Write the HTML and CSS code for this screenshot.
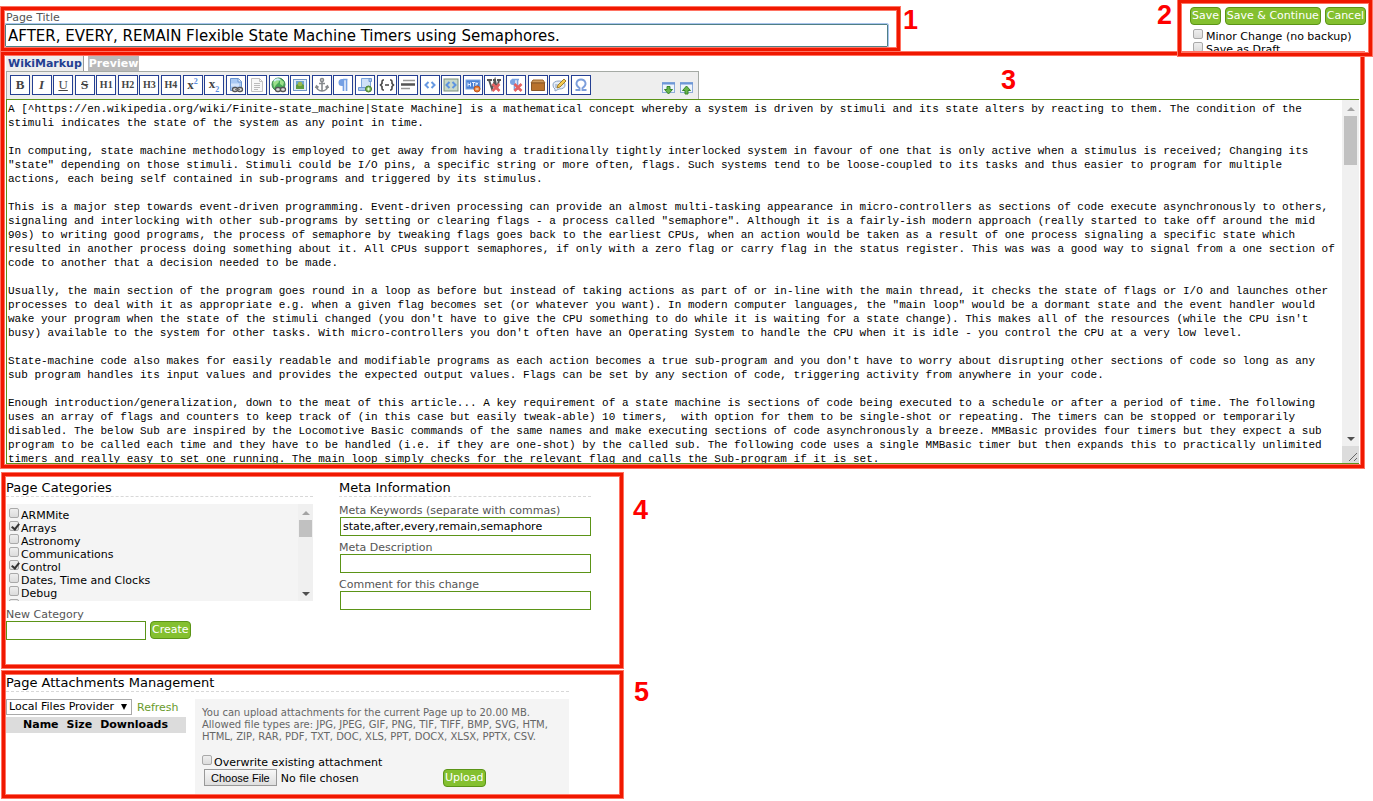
FILE: index.html
```html
<!DOCTYPE html>
<html lang="en">
<head>
<meta charset="utf-8">
<title>Edit Page</title>
<link rel="stylesheet" href="styles.css">
</head>
<body>
<header class="top">
  <div class="title-field">
    <label for="title">Page Title</label>
    <input id="title" class="title-input" type="text" value="AFTER, EVERY, REMAIN Flexible State Machine Timers using Semaphores.">
  </div>
  <div class="actions">
    <div class="action-buttons">
      <button class="btn">Save</button>
      <button class="btn">Save &amp; Continue</button>
      <button class="btn">Cancel</button>
    </div>
    <label class="check"><input type="checkbox"><span>Minor Change (no backup)</span></label>
    <label class="check"><input type="checkbox"><span>Save as Draft</span></label>
  </div>
</header>

<main>
<section class="editor">
  <nav class="tabs">
    <button class="tab tab-active">WikiMarkup</button>
    <button class="tab">Preview</button>
  </nav>
  <div class="toolbar">
    <div class="tools">
      <button class="tool" aria-label="Bold"><b>B</b></button>
      <button class="tool" aria-label="Italic"><b><i>I</i></b></button>
      <button class="tool" aria-label="Underline"><u>U</u></button>
      <button class="tool" aria-label="Strikethrough"><b><s>S</s></b></button>
      <button class="tool tool-h" aria-label="Heading 1">H1</button>
      <button class="tool tool-h" aria-label="Heading 2">H2</button>
      <button class="tool tool-h" aria-label="Heading 3">H3</button>
      <button class="tool tool-h" aria-label="Heading 4">H4</button>
      <button class="tool tool-x" aria-label="Superscript"><span>x<sup>2</sup></span></button>
      <button class="tool tool-x" aria-label="Subscript"><span>x<sub>2</sub></span></button>
      <button class="tool" aria-label="Page link"><svg viewBox="0 0 16 16"><path d="M2.500 1.500h8l3 3v9h-11z" fill="#a9c9f3" stroke="#6b95cf"/><path d="M10 1.500v3.500h3.500" fill="#e6f0fc" stroke="#6b95cf"/><path d="M3 8h8" stroke="#d5e5fa" stroke-width="3"/><rect x="4.500" y="10.500" width="5" height="4" rx="2" fill="#ddd" stroke="#555" stroke-width="1.300"/><rect x="9.500" y="10.500" width="5" height="4" rx="2" fill="#ddd" stroke="#555" stroke-width="1.300"/><path d="M7 12.500h5" stroke="#777"/></svg></button>
      <button class="tool" aria-label="Page"><svg viewBox="0 0 16 16"><path d="M2.500 1.500h8l3 3v10h-11z" fill="#f8f8f8" stroke="#c2c2c2"/><path d="M10.500 1.500v3h3" fill="none" stroke="#c2c2c2"/><path d="M5 6.500h6M5 8.500h6M5 10.500h6M5 12.500h4" stroke="#bbb"/></svg></button>
      <button class="tool" aria-label="External link"><svg viewBox="0 0 16 16"><circle cx="7.500" cy="7.500" r="6.500" fill="#48a957" stroke="#3e8a57"/><path d="M2 5q3-4 5-3l1 3-3 3-2 3zM9 2l4 3-1 4-3-2z" fill="#9be08b"/><path d="M3 4q3-3 6-1" stroke="#d4efff" stroke-width="2" fill="none"/><rect x="4.500" y="10.500" width="5" height="4" rx="2" fill="#ddd" stroke="#555" stroke-width="1.300"/><rect x="9.500" y="10.500" width="5" height="4" rx="2" fill="#ddd" stroke="#555" stroke-width="1.300"/></svg></button>
      <button class="tool" aria-label="Image"><svg viewBox="0 0 16 16"><rect x="1.500" y="2.500" width="13" height="11" fill="#dfeaf8" stroke="#7297c8"/><path d="M4 4h8v8H4z" fill="#6ea5cf"/><path d="M4 12V8q4-3 8 0v4z" fill="#5d9b3d"/><circle cx="8" cy="7" r="2.300" fill="#9ab94e"/></svg></button>
      <button class="tool" aria-label="Anchor"><svg viewBox="0 0 16 16" fill="none" stroke="#85898c" stroke-width="1.600"><circle cx="8" cy="3" r="1.500"/><path d="M8 4.500v9.500M5 6.500h6M2.500 9.500Q3 13.500 8 14q5-.5 5.500-4.500M1.500 11l1-2 2 1.500M11.500 10.500l2-1.500 1 2"/></svg></button>
      <button class="tool" aria-label="Line break"><svg viewBox="0 0 16 16"><path d="M8 2.500h4.500M8.500 2v12M11.500 2v12" stroke="#74a0e4" stroke-width="1.700"/><path d="M9 2H7a3.500 3.500 0 000 7h2z" fill="#74a0e4"/></svg></button>
      <button class="tool" aria-label="Snippet"><svg viewBox="0 0 16 16"><path d="M4.500 1.500h9v10h-9z" fill="#cfe1f8" stroke="#7da6dd"/><path d="M12 1.500h2.500v3H12zM1.500 10.500h9v3h-9z" fill="#a8c8f1" stroke="#7299d1"/><circle cx="11.500" cy="12" r="3" fill="#7db758" stroke="#437a2d"/><path d="M11.500 10.500v3M10 12h3" stroke="#e4ffd8"/></svg></button>
      <button class="tool" aria-label="Special tag"><svg viewBox="0 0 16 16" fill="none" stroke="#444" stroke-width="1.600"><path d="M5 3H4Q3 3 3 5v1.500L1.500 8 3 9.500V11q0 2 1 2h1M11 3h1q1 0 1 2v1.500L14.500 8 13 9.500V11q0 2-1 2h-1M6 8h4"/></svg></button>
      <button class="tool" aria-label="Horizontal line"><svg viewBox="0 0 16 16"><path d="M3 3.500h12M1 11.500h9" stroke="#999" stroke-width="1.500"/><path d="M1 7.500h14" stroke="#555" stroke-width="2.500"/></svg></button>
      <button class="tool" aria-label="Code"><svg viewBox="0 0 16 16" fill="none" stroke="#6799e2" stroke-width="2"><path d="M6.500 5L3.500 8l3 3M9.500 5l3 3-3 3"/></svg></button>
      <button class="tool" aria-label="Code block"><svg viewBox="0 0 16 16"><rect x="1" y="2" width="14" height="12" fill="#c8d8ca" stroke="#7c917e"/><path d="M6.500 5L3.500 8l3 3M9.500 5l3 3-3 3" fill="none" stroke="#5d94e0" stroke-width="2"/></svg></button>
      <button class="tool" aria-label="No HTML"><svg viewBox="0 0 16 16"><rect x="1" y="3" width="14" height="9" fill="#4c82d4" stroke="#7ea7e4"/><path d="M3 5.500v4M5.500 5.500v4M3 7.500h3M7 5.500h3M8.500 5.500v4M11 9.500v-4l1 2 1-2" fill="none" stroke="#e2edff"/><circle cx="12" cy="12" r="3" fill="#e77b31" stroke="#bf551b"/><path d="M10.500 12h3" stroke="#fff"/></svg></button>
      <button class="tool" aria-label="No wiki"><svg viewBox="0 0 16 16"><path d="M1 3h5M7 3h3M11 3h4M3 3l3 9 3-9 2 9 2-9" fill="none" stroke="#555" stroke-width="1.900"/><path d="M6.500 7l7 7M13.500 7l-7 7" stroke="#e36161" stroke-width="2.500"/></svg></button>
      <button class="tool" aria-label="No line break"><svg viewBox="0 0 16 16"><path d="M4 2.500h7M6.500 2v11M9.500 2v11" stroke="#7ba4e2" stroke-width="1.700"/><path d="M6 2H5a3 3 0 000 6h1z" fill="#7ba4e2"/><path d="M6.500 7l7 7M13.500 7l-7 7" stroke="#e36161" stroke-width="2.500"/></svg></button>
      <button class="tool" aria-label="Box"><svg viewBox="0 0 16 16"><path d="M3 3h10l2 3H1z" fill="#ce9a5b" stroke="#9d6229"/><path d="M1.500 6h13v7.500h-13z" fill="#b9722c" stroke="#8a5726"/></svg></button>
      <button class="tool" aria-label="Comment"><svg viewBox="0 0 16 16"><path d="M2 8q0-4 6-4t6 4-6 4l-4 2v-2q-2-1-2-4z" fill="#e6edf6" stroke="#8ba4c6"/><path d="M4 8h5M4 10h4" stroke="#89a0c1"/><path d="M6 11l1-3 6-6 2 2-6 6z" fill="#f4cb51" stroke="#9f7f30"/></svg></button>
      <button class="tool" aria-label="Symbols"><svg viewBox="0 0 16 16" fill="none" stroke="#7c9edb" stroke-width="1.900"><path d="M2.500 13h4v-2Q3 9 3.500 6 4.500 2.500 8 2.500t4.500 3.500q.5 3-3 5v2h4"/></svg></button>
    </div>
    <div class="resize-tools">
      <button class="plain" aria-label="Enlarge editor"><svg viewBox="0 0 14 14"><rect x=".5" y="1.500" width="12" height="10" fill="#edf4fd" stroke="#8eabd9"/><path d="M0 2.500h13" stroke="#6d97d7" stroke-width="2"/><path d="M5 5.500h3v3h2.500l-4 4.500-4-4.500H5z" fill="#69b54b" stroke="#37852a"/></svg></button>
      <button class="plain" aria-label="Reduce editor"><svg viewBox="0 0 14 14"><rect x=".5" y="1.500" width="12" height="10" fill="#edf4fd" stroke="#8eabd9"/><path d="M0 2.500h13" stroke="#6d97d7" stroke-width="2"/><path d="M5 13h3v-3.500h2.500L6.500 5l-4 4.500H5z" fill="#69b54b" stroke="#37852a"/></svg></button>
    </div>
  </div>
  <div class="markup-box">
    <textarea class="markup" aria-label="Wiki markup" spellcheck="false">A [^https://en.wikipedia.org/wiki/Finite-state_machine|State Machine] is a mathematical concept whereby a system is driven by stimuli and its state alters by reacting to them. The condition of the stimuli indicates the state of the system as any point in time.

In computing, state machine methodology is employed to get away from having a traditionally tightly interlocked system in favour of one that is only active when a stimulus is received; Changing its "state" depending on those stimuli. Stimuli could be I/O pins, a specific string or more often, flags. Such systems tend to be loose-coupled to its tasks and thus easier to program for multiple actions, each being self contained in sub-programs and triggered by its stimulus.

This is a major step towards event-driven programming. Event-driven processing can provide an almost multi-tasking appearance in micro-controllers as sections of code execute asynchronously to others, signaling and interlocking with other sub-programs by setting or clearing flags - a process called "semaphore". Although it is a fairly-ish modern approach (really started to take off around the mid 90s) to writing good programs, the process of semaphore by tweaking flags goes back to the earliest CPUs, when an action would be taken as a result of one process signaling a specific state which resulted in another process doing something about it. All CPUs support semaphores, if only with a zero flag or carry flag in the status register. This was was a good way to signal from a one section of code to another that a decision needed to be made.

Usually, the main section of the program goes round in a loop as before but instead of taking actions as part of or in-line with the main thread, it checks the state of flags or I/O and launches other processes to deal with it as appropriate e.g. when a given flag becomes set (or whatever you want). In modern computer languages, the "main loop" would be a dormant state and the event handler would wake your program when the state of the stimuli changed (you don't have to give the CPU something to do while it is waiting for a state change). This makes all of the resources (while the CPU isn't busy) available to the system for other tasks. With micro-controllers you don't often have an Operating System to handle the CPU when it is idle - you control the CPU at a very low level.

State-machine code also makes for easily readable and modifiable programs as each action becomes a true sub-program and you don't have to worry about disrupting other sections of code so long as any sub program handles its input values and provides the expected output values. Flags can be set by any section of code, triggering activity from anywhere in your code.

Enough introduction/generalization, down to the meat of this article... A key requirement of a state machine is sections of code being executed to a schedule or after a period of time. The following uses an array of flags and counters to keep track of (in this case but easily tweak-able) 10 timers,  with option for them to be single-shot or repeating. The timers can be stopped or temporarily disabled. The below Sub are inspired by the Locomotive Basic commands of the same names and make executing sections of code asynchronously a breeze. MMBasic provides four timers but they expect a sub program to be called each time and they have to be handled (i.e. if they are one-shot) by the called sub. The following code uses a single MMBasic timer but then expands this to practically unlimited timers and really easy to set one running. The main loop simply checks for the relevant flag and calls the Sub-program if it is set.</textarea>
    <div class="scroll">
      <span class="arrow arrow-up"></span>
      <span class="thumb thumb-long"></span>
      <span class="arrow arrow-down"></span>
      <svg class="grip" viewBox="0 0 17 17"><path d="M7 15l8-8M12 15l3-3" stroke="#666" fill="none"/></svg>
    </div>
  </div>
</section>

<section class="details">
  <div class="categories">
    <h2>Page Categories</h2>
    <div class="cat-box">
      <div class="cat-list">
        <label class="check"><input type="checkbox"><span>ARMMite</span></label>
        <label class="check"><input type="checkbox" checked><span>Arrays</span></label>
        <label class="check"><input type="checkbox"><span>Astronomy</span></label>
        <label class="check"><input type="checkbox"><span>Communications</span></label>
        <label class="check"><input type="checkbox" checked><span>Control</span></label>
        <label class="check"><input type="checkbox"><span>Dates, Time and Clocks</span></label>
        <label class="check"><input type="checkbox"><span>Debug</span></label>
        <label class="check"><input type="checkbox"></label>
      </div>
      <div class="scroll">
        <span class="arrow arrow-up"></span>
        <span class="thumb"></span>
        <span class="arrow arrow-down"></span>
      </div>
    </div>
    <label for="newcat">New Category</label>
    <div class="new-cat"><input id="newcat" class="text" type="text"><button class="btn">Create</button></div>
  </div>
  <div class="meta">
    <h2>Meta Information</h2>
    <label for="keywords">Meta Keywords (separate with commas)</label>
    <input id="keywords" class="text" type="text" value="state,after,every,remain,semaphore">
    <label for="desc">Meta Description</label>
    <input id="desc" class="text" type="text">
    <label for="comment">Comment for this change</label>
    <input id="comment" class="text" type="text">
  </div>
</section>

<section class="attachments">
  <h2>Page Attachments Management</h2>
  <div class="attach-row">
    <div class="files">
      <div class="provider">
        <div class="select"><select aria-label="Files provider"><option>Local Files Provider</option></select></div>
        <a href="#">Refresh</a>
      </div>
      <table>
        <thead><tr><th class="pad"></th><th>Name</th><th>Size</th><th>Downloads</th><th class="rest"></th></tr></thead>
      </table>
    </div>
    <div class="upload">
      <p>You can upload attachments for the current Page up to 20.00 MB.<br>Allowed file types are: JPG, JPEG, GIF, PNG, TIF, TIFF, BMP, SVG, HTM,<br>HTML, ZIP, RAR, PDF, TXT, DOC, XLS, PPT, DOCX, XLSX, PPTX, CSV.</p>
      <label class="check"><input type="checkbox"><span>Overwrite existing attachment</span></label>
      <div class="upload-row"><input type="file" aria-label="File to upload"><button class="btn">Upload</button></div>
    </div>
  </div>
</section>
</main>

<div class="mark mark-1"><span>1</span></div>
<div class="mark mark-3"><span>3</span></div>
<div class="mark mark-2"><span>2</span></div>
<div class="mark mark-4"><span>4</span></div>
<div class="mark mark-5"><span>5</span></div>
</body>
</html>
```
FILE: styles.css
```css
* { box-sizing: border-box; }
body {
  position: relative;
  min-height: 100vh;
  margin: 0;
  background: #fff;
  color: #000;
  font: 11px/13px Verdana, "DejaVu Sans", sans-serif;
}
button, input, select, textarea { font: inherit; color: inherit; margin: 0; }
button { padding: 0; }
label { display: block; color: #555; }
h2 {
  margin: 0;
  padding-top: 1px;
  border-bottom: 1px dashed #d8d8d8;
  font-size: 13px;
  font-weight: normal;
  line-height: 16px;
}

/* Shared controls */
.btn {
  height: 18px;
  padding: 0 1px;
  border: 1px solid #5b9417;
  border-radius: 4px;
  background: #84c02f;
  color: #fff;
  line-height: 16px;
  white-space: nowrap;
}
.text {
  display: block;
  width: 100%;
  height: 19px;
  padding: 0 2px;
  border: 1px solid #5b9417;
  background: #fff;
}
.check { display: flex; align-items: flex-start; height: 13px; color: #000; }
.check span { padding: 1px 0 0 2px; line-height: 13px; white-space: nowrap; }
.check input {
  position: relative;
  flex: none;
  appearance: none;
  width: 10px;
  height: 10px;
  border: 1px solid #a9a9a9;
  border-radius: 2px;
  background: linear-gradient(#eee, #dcdcdc);
}
.check input:checked::after {
  content: "";
  position: absolute;
  left: 3px;
  top: 0;
  width: 3px;
  height: 6px;
  border: solid #333;
  border-width: 0 2px 2px 0;
  transform: rotate(38deg);
}

/* Header */
.top { display: flex; justify-content: space-between; height: 53px; overflow: hidden; padding: 7px 7px 0 5px; }
.title-field { width: 883px; padding-top: 4px; }
.title-field label { padding-left: 1px; }
.title-input {
  display: block;
  width: 100%;
  height: 23px;
  padding: 0 2px;
  border: 1px solid #4f7f86;
  border-radius: 1px;
  outline: 1px solid #a9c5ef;
  font-size: 15px;
}
.actions { width: 176px; }
.action-buttons { display: flex; justify-content: space-between; margin-bottom: 4px; }
.actions .check { padding-left: 3px; }
.actions .check span { padding-left: 3px; }

/* Editor */
.editor { padding: 3px 14px 0 6px; }
.tabs { display: flex; align-items: flex-end; gap: 4px; height: 15px; }
.tab { height: 15px; padding: 0 1px; border: 0; background: #b9b9b9; color: #fff; font-weight: bold; line-height: 15px; }
.tab-active { padding-left: 2px; border-right: 1px solid #999; background: #eee; color: #243f92; }
.toolbar {
  display: flex;
  align-items: flex-start;
  justify-content: space-between;
  width: 693px;
  height: 28px;
  padding: 3px 4px 0 3px;
  border: 1px solid #a5aaa5;
  border-width: 1px 1px 0 1px;
  background: #eee;
}
.tools { display: flex; justify-content: space-between; width: 581px; }
.tool {
  display: flex;
  align-items: center;
  justify-content: center;
  width: 20px;
  height: 20px;
  border: 1px solid #243f92;
  background: #fff;
  color: #444;
  font: 13px/16px "Liberation Serif", serif;
}
.tool svg { width: 16px; height: 16px; }
.tool-h { font-size: 10px; font-weight: bold; }
.tool-x { font-weight: bold; }
.tool-x sup, .tool-x sub { color: #5c8ee0; font-size: 8px; line-height: 8px; }
.resize-tools { display: flex; gap: 4px; padding-top: 6px; }
.plain { width: 14px; height: 14px; border: 0; background: none; }
.plain svg { display: block; width: 14px; height: 14px; }
.markup-box { display: flex; height: 365px; border: 1px solid #5b9417; border-right: 0; }
.markup {
  flex: 1;
  min-width: 0;
  padding: 2px 1px 0 1px;
  border: 0;
  outline: 0;
  overflow: hidden;
  resize: none;
  background: #fff;
  font: 11px/14px "Liberation Mono", Consolas, monospace;
}

/* Scroll bars */
.scroll { display: flex; flex: none; flex-direction: column; align-items: center; width: 17px; background: #f0f0f0; }
.arrow { width: 17px; height: 16px; }
.arrow::before { content: ""; display: block; margin: 7px auto 0; width: 0; border: solid transparent; border-width: 0 4px; }
.arrow-up::before { border-bottom: 4px solid #a3a3a3; }
.arrow-down { margin-top: auto; }
.arrow-down::before { border-top: 4px solid #505050; }
.thumb { width: 13px; height: 17px; background: #c1c1c1; }
.thumb-long { height: 49px; }
.grip { width: 17px; height: 17px; background: #dcdcdc; }

/* Categories and metadata */
.details { display: flex; gap: 26px; height: 210px; padding: 15px 0 0 6px; }
.categories { width: 307px; }
.cat-box { display: flex; height: 97px; margin: 7px 0 7px 1px; background: #f4f4f4; }
.cat-list { flex: 1; padding: 4px 2px 0; overflow: hidden; }
.cat-box .scroll { width: 15px; }
.new-cat { display: flex; gap: 4px; }
.new-cat .text { width: 140px; }
.meta { width: 252px; }
.meta h2 { margin-bottom: 7px; }
.meta .text { width: 251px; margin: 0 0 5px 1px; }

/* Attachments */
.attachments { width: 569px; padding-left: 6px; }
.attach-row { display: flex; gap: 9px; padding-top: 7px; }
.files { width: 180px; }
.provider { display: flex; align-items: center; gap: 5px; height: 16px; margin-bottom: 2px; }
.select { position: relative; width: 126px; }
.select select { display: block; appearance: none; width: 100%; height: 16px; padding: 0 2px; border: 1px solid #a9a9a9; background: #fff; line-height: 14px; }
.select::after {
  content: "";
  position: absolute;
  right: 5px;
  top: 5px;
  border: 3px solid transparent;
  border-top: 6px solid #000;
  border-bottom: 0;
  pointer-events: none;
}
.provider a { color: #6a9b2c; text-decoration: none; }
table { width: 100%; border-collapse: collapse; background: #dcdcdc; }
th { padding: 1px 4px; line-height: 14px; }
.pad { width: 13px; }
.rest { width: 14px; }
.upload { flex: 1; height: 95px; padding: 8px 0 0 7px; background: #f4f4f4; }
.upload p { margin: 0 0 12px; color: #666; font-size: 10px; line-height: 12px; white-space: nowrap; }
.upload-row { display: flex; align-items: center; margin-top: 1px; padding-left: 2px; }
.upload-row input { width: 239px; height: 18px; line-height: 18px; }
.upload-row input::file-selector-button {
  height: 17px;
  margin: 0 4px 0 0;
  padding: 0 6px;
  border: 1px solid #999;
  background: linear-gradient(#f8f8f8, #dedede);
  font: 11px/14px "Liberation Sans", sans-serif;
}

/* Numbered callouts drawn over the page */
.mark {
  position: absolute;
  border: 3px solid #f01800;
  box-shadow: 0 0 0 1px #ff7363, inset 0 0 0 1px #ff7363;
  pointer-events: none;
}
.mark span { position: absolute; color: #f00; font: bold 27px/27px "Liberation Sans", Arial, sans-serif; }
.mark-1 { left: 1px; top: 7px; width: 899px; height: 44px; }
.mark-1 span { left: 899px; top: -3px; }
.mark-2 { left: 1178px; top: 0; width: 194px; height: 56px; }
.mark-2 span { left: -24px; top: -1px; }
.mark-3 { left: 1px; top: 52px; width: 1363px; height: 416px; }
.mark-3 span { left: 997px; top: 12px; }
.mark-4 { left: 2px; top: 473px; width: 621px; height: 195px; }
.mark-4 span { left: 628px; top: 21px; }
.mark-5 { left: 2px; top: 671px; width: 621px; height: 127px; }
.mark-5 span { left: 629px; top: 5px; }
```
